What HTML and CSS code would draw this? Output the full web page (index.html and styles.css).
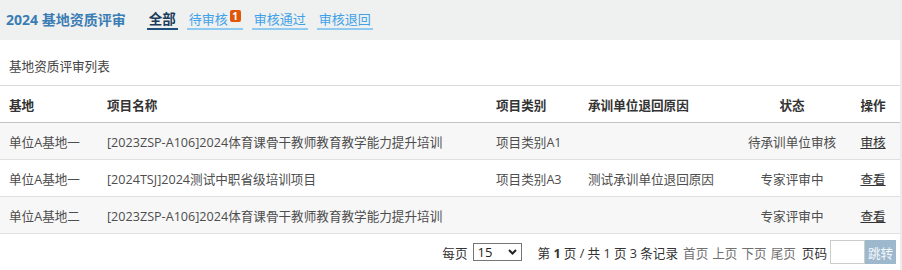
FILE: index.html
```html
<!DOCTYPE html>
<html lang="zh-CN">
<head>
<meta charset="utf-8">
<title>2024 基地资质评审</title>
<link rel="stylesheet" href="styles.css">
</head>
<body>
<div class="page">
  <header class="topbar">
    <h1 class="title">2024 基地资质评审</h1>
    <nav class="tabs">
      <a class="tab active">全部</a>
      <a class="tab">待审核<span class="badge">1</span></a>
      <a class="tab">审核通过</a>
      <a class="tab">审核退回</a>
    </nav>
  </header>
  <section class="panel">
    <div class="caption">基地资质评审列表</div>
    <table class="grid">
      <colgroup>
        <col class="c1"><col class="c2"><col class="c3"><col class="c4"><col class="c5"><col class="c6">
      </colgroup>
      <thead>
        <tr>
          <th>基地</th>
          <th>项目名称</th>
          <th>项目类别</th>
          <th>承训单位退回原因</th>
          <th class="center">状态</th>
          <th class="center">操作</th>
        </tr>
      </thead>
      <tbody>
        <tr class="odd">
          <td>单位A基地一</td>
          <td>[2023ZSP-A106]2024体育课骨干教师教育教学能力提升培训</td>
          <td>项目类别A1</td>
          <td></td>
          <td class="center">待承训单位审核</td>
          <td class="center"><a class="op">审核</a></td>
        </tr>
        <tr>
          <td>单位A基地一</td>
          <td>[2024TSJ]2024测试中职省级培训项目</td>
          <td>项目类别A3</td>
          <td>测试承训单位退回原因</td>
          <td class="center">专家评审中</td>
          <td class="center"><a class="op">查看</a></td>
        </tr>
        <tr class="odd">
          <td>单位A基地二</td>
          <td>[2023ZSP-A106]2024体育课骨干教师教育教学能力提升培训</td>
          <td></td>
          <td></td>
          <td class="center">专家评审中</td>
          <td class="center"><a class="op">查看</a></td>
        </tr>
      </tbody>
    </table>
    <div class="pager">
      <span class="lbl">每页</span>
      <span class="select-wrap">
        <select class="size">
          <option>15</option>
          <option>30</option>
          <option>50</option>
        </select>
        <svg class="chev" width="9" height="6" viewBox="0 0 9 6"><path d="M1 1 L4.5 4.5 L8 1" fill="none" stroke="#222" stroke-width="2"/></svg>
      </span>
      <span class="info">第 <b>1</b> 页 / 共 1 页 3 条记录</span>
      <span class="nav">首页</span>
      <span class="nav">上页</span>
      <span class="nav">下页</span>
      <span class="nav">尾页</span>
      <span class="lbl pcode">页码</span>
      <input class="pnum" type="text">
      <button class="go">跳转</button>
    </div>
  </section>
</div>
</body>
</html>
```
FILE: styles.css
```css
html, body {
  margin: 0;
  padding: 0;
  background: #ffffff;
}
body {
  font-family: "Open Sans", "Noto Sans CJK SC", sans-serif;
  font-size: 12.6px;
  color: #4d4d4d;
}
.page {
  width: 900px;
  border-right: 2px solid #ececec;
  min-height: 270px;
}
.topbar {
  height: 40px;
  background: #eff0f0;
  display: flex;
  align-items: center;
  padding-left: 6px;
}
.title {
  margin: 0 21px 0 0;
  font-size: 14px;
  font-weight: bold;
  color: #3a7db4;
  line-height: 18px;
}
.tabs {
  display: flex;
  align-items: center;
  gap: 9px;
}
.tab {
  display: block;
  font-size: 13px;
  line-height: 18px;
  padding: 0 2px;
  color: #3fa2e8;
  border-bottom: 2px solid #8fcaf1;
  cursor: pointer;
}
.tab.active {
  font-weight: bold;
  font-size: 13.5px;
  color: #1b3c5a;
  border-bottom-color: #1f4f7c;
}
.badge {
  display: inline-block;
  position: relative;
  top: -4px;
  margin-left: 2px;
  width: 11px;
  height: 12px;
  line-height: 12px;
  border-radius: 2px;
  background: #e0570a;
  color: #fff;
  font-size: 10px;
  font-weight: bold;
  text-align: center;
}
.caption {
  padding: 18px 9px 9px;
  line-height: 18px;
  color: #444;
}
.grid {
  width: 900px;
  border-collapse: collapse;
  table-layout: fixed;
  border-top: 1px solid #dcdcdc;
}
.c1 { width: 98px; }
.c2 { width: 389px; }
.c3 { width: 92px; }
.c4 { width: 159px; }
.c5 { width: 108px; }
.c6 { width: 54px; }
.grid th, .grid td {
  height: 36px;
  padding: 0 0 0 9px;
  text-align: left;
  white-space: nowrap;
  overflow: hidden;
}
.grid th {
  font-weight: bold;
  color: #333;
  border-bottom: 1px solid #c4c4c4;
}
.grid td {
  border-bottom: 1px solid #e0e0e0;
}
.grid .center {
  text-align: center;
  padding: 0;
}
.grid tr.odd td {
  background: #f7f7f7;
}
.op {
  color: #333;
  text-decoration: underline;
  cursor: pointer;
}
.pager {
  display: flex;
  justify-content: flex-end;
  align-items: center;
  padding: 6px 4px 0 0;
  height: 24px;
  color: #333;
}
.lbl {
  margin-right: 5px;
}
.select-wrap {
  position: relative;
  display: inline-block;
  margin-right: 16px;
}
.size {
  appearance: none;
  -webkit-appearance: none;
  width: 49px;
  height: 18px;
  border: 1px solid #767676;
  border-radius: 0;
  background: #fff;
  font-family: inherit;
  font-size: 13px;
  line-height: 16px;
  padding: 0 0 0 4px;
  color: #222;
  display: block;
}
.chev {
  position: absolute;
  right: 5px;
  top: 6px;
  pointer-events: none;
}
.info {
  margin-right: 5px;
}
.info b {
  font-weight: bold;
}
.nav {
  color: #707070;
  margin-right: 4px;
  cursor: pointer;
}
.pcode {
  margin-left: 2px;
  margin-right: 3px;
}
.pnum {
  box-sizing: border-box;
  width: 35px;
  height: 24px;
  border: 1px solid #ccc;
  padding: 0;
  margin: 0;
  outline: none;
}
.go {
  box-sizing: border-box;
  width: 31px;
  height: 24px;
  border: none;
  margin: 0;
  padding: 0;
  background: #9db7cd;
  color: #f4f8fb;
  font-family: inherit;
  font-size: 12.6px;
}
```
